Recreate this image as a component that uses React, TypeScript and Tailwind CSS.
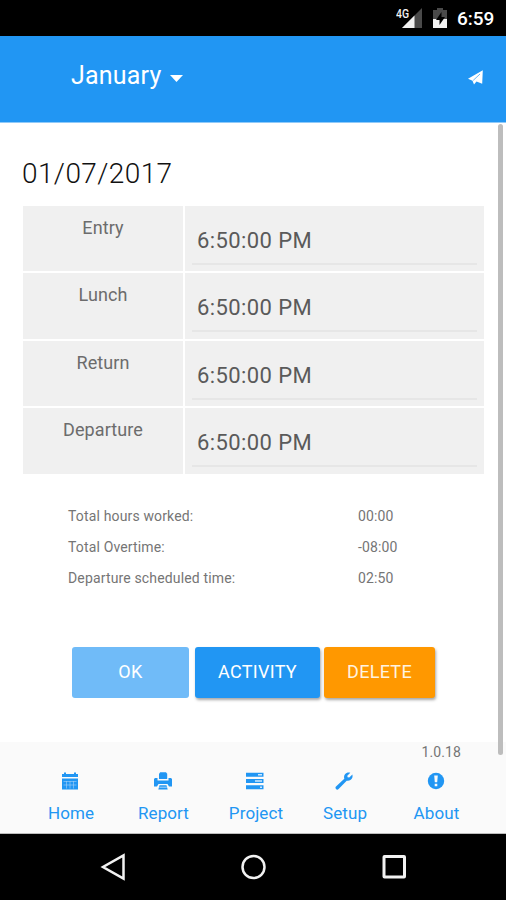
import React, { useState } from "react";

const times = [
    { label: "Entry", value: "6:50:00 PM" },
    { label: "Lunch", value: "6:50:00 PM" },
    { label: "Return", value: "6:50:00 PM" },
    { label: "Departure", value: "6:50:00 PM" },
];

const totals = [
    { label: "Total hours worked:", value: "00:00" },
    { label: "Total Overtime:", value: "-08:00" },
    { label: "Departure scheduled time:", value: "02:50" },
];

function StatusBar() {
    return (
        <div className="flex h-9 shrink-0 items-center justify-end bg-black pr-[11px] text-white">
            <svg width="27" height="22" viewBox="0 0 27 22" className="mr-[10px]">
                <path d="M26 1V21H6Z" fill="#4a4a4a" />
                <path d="M18.500 8.500V21H6Z" fill="#f2f2f2" />
                <text x="0" y="10.500" fill="#f2f2f2" fontSize="12.500" fontWeight="500" fontFamily="Roboto, sans-serif" textLength="13" lengthAdjust="spacingAndGlyphs" stroke="#000" strokeWidth="1.500" paintOrder="stroke">4G</text>
            </svg>
            <svg width="14" height="22" viewBox="0 0 14 22" className="mr-[10px]">
                <path d="M4 1h6v2h4v9H0V3h4z" fill="#4a4a4a" />
                <path d="M0 12h14v9H0z" fill="#f2f2f2" />
                <path d="M8.500 5L3 13h3.500v5L12 10H8.500z" fill="#000" />
            </svg>
            <span className="mt-px w-[38px] text-[19px] leading-none font-medium whitespace-nowrap">6:59</span>
        </div>
    );
}

function Header() {
    return (
        <header className="flex h-[87px] shrink-0 items-start justify-between border-b border-[#90caf9] bg-[#2196f3] pr-[22px] pl-[71px] text-white">
            <div className="flex items-center pt-[25px]">
                <span className="text-[25px] leading-[30px] tracking-[0.2px]">January</span>
                <svg width="13" height="7" viewBox="0 0 13 7" className="mt-[4px] ml-[8px]">
                    <path d="M0 0H13L6.500 7Z" fill="currentColor" />
                </svg>
            </div>
            <svg width="16" height="15" viewBox="0 0 16 15" className="mt-[34px]">
                <path d="M14.800 0.300L14.200 13.700L8.500 11.500L6 14.500L4.500 10.700L0 8.700Z" fill="currentColor" />
                <path d="M12 4L5.200 10.400" stroke="#2196f3" strokeWidth="0.700" fill="none" />
            </svg>
        </header>
    );
}

function CalendarIcon() {
    return (
        <svg width="18" height="18" viewBox="0 0 18 18" fill="#2196f3">
            <path d="M1 2h2V.500h2V2h8V.500h2V2h2v3H1z" />
            <path d="M1 6.500h16V17.500H1z" />
            <path d="M2.500 9.500h13M2.500 13h13M5.500 9v7.500M9 9v7.500M12.500 9v7.500" stroke="#a5d2f9" strokeWidth="0.600" />
        </svg>
    );
}

function PrintIcon() {
    return (
        <svg width="18" height="18" viewBox="0 0 18 18" fill="#2196f3">
            <path d="M5 1.700L6.200.300H12L13.200 1.700V7H5z" />
            <path d="M0 7l1-1h2.500v2.500h11V6H17l1 1v7.500h-3L13.500 12h-9L3 14.500H0z" />
            <path d="M5.500 13.300h7l1.200 4.200H4.300z" />
            <path d="M5.300 15.200h7.500" stroke="#cfe7fc" strokeWidth="0.800" />
        </svg>
    );
}

function TasksIcon() {
    return (
        <svg width="18" height="18" viewBox="0 0 18 18" fill="#2196f3">
            <path d="M0 .800h17.500v4H0zM0 7h17.500v4H0zM0 13.200h17.500v4H0z" />
            <path d="M12 2h4v1.600h-4zM9 8.200h7v1.600H9zM14 14.400h2V16h-2z" fill="#cfe7fc" />
        </svg>
    );
}

function WrenchIcon() {
    return (
        <svg width="18" height="18" viewBox="0 0 18 18" fill="#2196f3">
            <path d="M15.300.700L12.300 3.700L12.600 5.200L14.200 5.500L17.400 2.600C18 4.800 17.200 7 15.400 8.100C14.200 8.900 12.900 9 11.700 8.700L3.600 17.100C2.800 17.800 1.700 17.800 1 17.100C.300 16.300.300 15.300 1 14.600L9.300 6.700C8.800 5.200 9 3.500 10 2.200C11.300.600 13.300.100 15.300.700Z" />
        </svg>
    );
}

function AboutIcon() {
    return (
        <svg width="18" height="18" viewBox="0 0 18 18">
            <circle cx="9" cy="9" r="8.200" fill="#2196f3" />
            <path d="M7.200 3.500h3.600L10.200 10.300H7.800zM7.700 11.800h2.600v2.500H7.700z" fill="#fafafa" />
        </svg>
    );
}

const tabs = [
    { label: "Home", icon: <CalendarIcon />, width: "w-[94px]" },
    { label: "Report", icon: <PrintIcon />, width: "w-[91px]" },
    { label: "Project", icon: <TasksIcon />, width: "w-[94px]" },
    { label: "Setup", icon: <WrenchIcon />, width: "w-[84px]" },
    { label: "About", icon: <AboutIcon />, width: "w-[99px]" },
];

function Footer() {
    return (
        <footer className="h-[92px] shrink-0 border-b border-[#bdbdbd] bg-[#fafafa]">
            <div className="h-[30px] pt-px pr-[45px] text-right text-[14px] leading-[18px] tracking-[0.1px] text-[#757575]">1.0.18</div>
            <nav className="flex pl-[23px]">
                {tabs.map((tab) => (
                    <a key={tab.label} href="#" className={`flex flex-col items-center text-[#2196f3] ${tab.width}`}>
                        {tab.icon}
                        <span className="mt-[13px] ml-[2px] text-[17px] leading-5 tracking-[0.1px]">{tab.label}</span>
                    </a>
                ))}
            </nav>
        </footer>
    );
}

function NavigationBar() {
    return (
        <div className="flex h-[66px] shrink-0 items-center justify-between bg-black px-[99px]">
            <svg width="28" height="30" viewBox="0 0 28 30" fill="none" stroke="#f2f2f2" strokeWidth="2.500">
                <path d="M24.500 3.500V26.500L4 15Z" />
            </svg>
            <svg width="28" height="28" viewBox="0 0 28 28" fill="none" stroke="#f2f2f2" strokeWidth="2.500">
                <circle cx="14.500" cy="14" r="11" />
            </svg>
            <svg width="28" height="28" viewBox="0 0 28 28" fill="none" stroke="#f2f2f2" strokeWidth="3">
                <rect x="5" y="3.500" width="20.500" height="20.500" rx="0.500" />
            </svg>
        </div>
    );
}

export default function App() {
    const [rows] = useState(times);

    return (
        <div className="relative flex h-[900px] w-[506px] flex-col overflow-hidden bg-white font-['Roboto',sans-serif]">
            <StatusBar />
            <Header />

            <main className="min-h-0 flex-1">
                <h1 className="pt-[34px] pl-[22px] text-[28px] leading-[34px] font-light tracking-[0.4px] text-[#111]">01/07/2017</h1>

                <div className="mt-[15px] flex flex-col gap-[2.3px] pr-[22px] pl-[23px]">
                    {rows.map((row) => (
                        <div key={row.label} className="flex h-[65.2px] gap-[2px]">
                            <div className="w-[160px] bg-[#f0f0f0] pt-[11px] text-center text-[18px] leading-[22px] tracking-[0.1px] text-[#6c6c6c]">{row.label}</div>
                            <div className="flex-1 bg-[#f0f0f0] pr-[7px] pl-[7px]">
                                <div className="h-[59px] border-b-2 border-[#e6e6e6] pt-[21px] pl-[5px] text-[22px] leading-[28px] tracking-[0.4px] text-[#5a5a5a]">{row.value}</div>
                            </div>
                        </div>
                    ))}
                </div>

                <div className="mt-[27px] px-[68px]">
                    {totals.map((total) => (
                        <div key={total.label} className="flex h-[31px] items-center text-[14px] tracking-[0.15px] text-[#757575]">
                            <span className="w-[290px]">{total.label}</span>
                            <span>{total.value}</span>
                        </div>
                    ))}
                </div>

                <div className="mt-[53px] flex pl-[72px] text-[18px] text-white">
                    <button className="h-[51px] w-[117px] rounded-[3px] bg-[#70bbf8] pb-[2px] tracking-[0.3px]">OK</button>
                    <button className="ml-[6px] h-[51px] w-[125px] rounded-[3px] bg-[#2196f3] pb-[2px] tracking-[0.3px] shadow-[1px_2px_3px_rgba(0,0,0,0.35)]">ACTIVITY</button>
                    <button className="ml-[4px] h-[51px] w-[111px] rounded-[3px] bg-[#ff9800] pb-[2px] tracking-[0.3px] text-[#fff3e0] shadow-[1px_2px_3px_rgba(0,0,0,0.35)]">DELETE</button>
                </div>
            </main>

            <Footer />
            <NavigationBar />

            {/* scroll thumb */}
            <div className="absolute top-[124px] right-[3px] h-[631px] w-[5px] rounded-sm bg-[#bdbdbd]" />
        </div>
    );
}
